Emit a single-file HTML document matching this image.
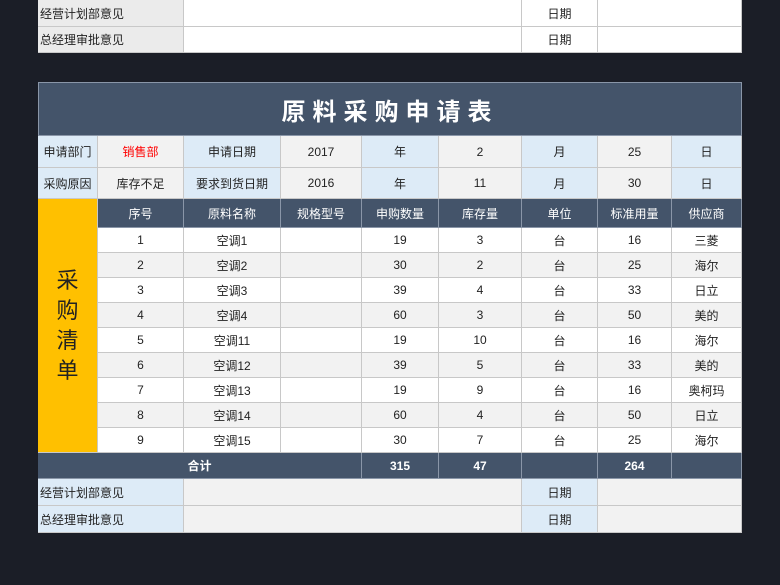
<!DOCTYPE html>
<html><head><meta charset="utf-8"><style>
*{margin:0;padding:0;box-sizing:border-box}
body{width:780px;height:585px;background:#1b1e27;position:relative;overflow:hidden;font-family:"Liberation Sans","Noto Sans CJK SC",sans-serif;font-size:12px;color:#222}
.c{position:absolute;display:flex;align-items:center;justify-content:center;border-right:1px solid #c8c8c8;border-bottom:1px solid #c8c8c8}
.g{background:#f2f2f2}.b{background:#ddebf7}.w{background:#fff}
.h{background:#44546a;color:#fff;border-color:#8a96a8}
.l{justify-content:flex-start;padding-left:2px}
</style></head><body>
<div id="r"></div>
<script>
const X=[38,98,184,281,362,439,522,598,672,742];
let H='';
function c(x1,x2,y1,y2,cls,t,st){H+=`<div class="c ${cls}" style="left:${x1}px;top:${y1}px;width:${x2-x1}px;height:${y2-y1}px;${st||''}">${t}</div>`}
c(38,184,0,27,'g l','经营计划部意见','background:#ebebeb');c(184,522,0,27,'w','');c(522,598,0,27,'w','日期');c(598,742,0,27,'w','');
c(38,184,27,53,'g l','总经理审批意见','background:#ebebeb');c(184,522,27,53,'w','');c(522,598,27,53,'w','日期');c(598,742,27,53,'w','');
c(38,742,82,136,'h','原料采购申请表','font-size:24px;font-weight:bold;letter-spacing:7px;border-top:1px solid #8a96a8;border-left:1px solid #8a96a8');
let r1=[['b','申请部门'],['g','<span style="color:#f00">销售部</span>'],['b','申请日期'],['g','2017'],['b','年'],['g','2'],['b','月'],['g','25'],['b','日']];
let r2=[['b','采购原因'],['g','库存不足'],['b','要求到货日期'],['g','2016'],['b','年'],['g','11'],['b','月'],['g','30'],['b','日']];
r1.forEach((v,i)=>c(X[i],X[i+1],136,168,v[0],v[1]));
r2.forEach((v,i)=>c(X[i],X[i+1],168,199,v[0],v[1]));
c(38,98,199,453,'','采<br>购<br>清<br>单','background:#ffc000;font-size:22px;line-height:30px;text-align:center;color:#222');
['序号','原料名称','规格型号','申购数量','库存量','单位','标准用量','供应商'].forEach((t,i)=>c(X[i+1],X[i+2],199,228,'h',t));
const d=[[1,'空调1',19,3,16,'三菱'],[2,'空调2',30,2,25,'海尔'],[3,'空调3',39,4,33,'日立'],[4,'空调4',60,3,50,'美的'],[5,'空调11',19,10,16,'海尔'],[6,'空调12',39,5,33,'美的'],[7,'空调13',19,9,16,'奥柯玛'],[8,'空调14',60,4,50,'日立'],[9,'空调15',30,7,25,'海尔']];
d.forEach((r,k)=>{let y=228+k*25,cl=k%2?'g':'w';let vals=[r[0],r[1],'',r[2],r[3],'台',r[4],r[5]];vals.forEach((t,i)=>c(X[i+1],X[i+2],y,y+25,cl,t))});
c(38,362,453,479,'h','合计','font-weight:bold');c(362,439,453,479,'h','315','font-weight:bold');c(439,522,453,479,'h','47','font-weight:bold');c(522,598,453,479,'h','');c(598,672,453,479,'h','264','font-weight:bold');c(672,742,453,479,'h','');
c(38,184,479,506,'b l','经营计划部意见');c(184,522,479,506,'g','');c(522,598,479,506,'b','日期');c(598,742,479,506,'g','');
c(38,184,506,533,'b l','总经理审批意见');c(184,522,506,533,'g','');c(522,598,506,533,'b','日期');c(598,742,506,533,'g','');
document.getElementById('r').innerHTML=H;
</script>
</body></html>
